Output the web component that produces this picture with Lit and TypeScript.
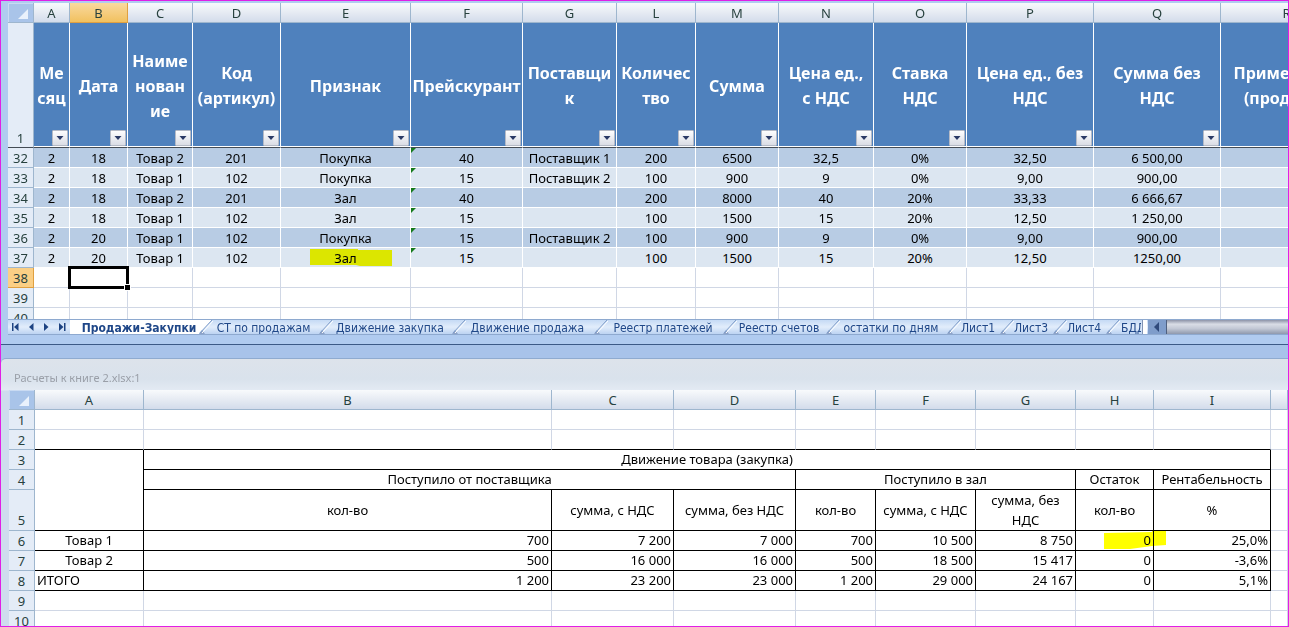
import { LitElement, html, svg, css, nothing } from "lit";
import { customElement, state } from "lit/decorators.js";

interface Column {
  letter: string;
  width: number;
  title?: string[];
}

const SALES_COLUMNS: Column[] = [
  { letter: "A", width: 36, title: ["Ме", "сяц"] },
  { letter: "B", width: 58, title: ["Дата"] },
  { letter: "C", width: 65, title: ["Наиме", "нован", "ие"] },
  { letter: "D", width: 88, title: ["Код", "(артикул)"] },
  { letter: "E", width: 130, title: ["Признак"] },
  { letter: "F", width: 112, title: ["Прейскурант"] },
  { letter: "G", width: 94, title: ["Поставщи", "к"] },
  { letter: "L", width: 79, title: ["Количес", "тво"] },
  { letter: "M", width: 83, title: ["Сумма"] },
  { letter: "N", width: 95, title: ["Цена ед.,", "с НДС"] },
  { letter: "O", width: 93, title: ["Ставка", "НДС"] },
  { letter: "P", width: 127, title: ["Цена ед., без", "НДС"] },
  { letter: "Q", width: 127, title: ["Сумма без", "НДС"] },
  { letter: "R", width: 132, title: ["Примечание", "(продажи)"] },
];

const SALES_ROWS: [number, string[]][] = [
  [32, ["2", "18", "Товар 2", "201", "Покупка", "40", "Поставщик 1", "200", "6500", "32,5", "0%", "32,50", "6 500,00", ""]],
  [33, ["2", "18", "Товар 1", "102", "Покупка", "15", "Поставщик 2", "100", "900", "9", "0%", "9,00", "900,00", ""]],
  [34, ["2", "18", "Товар 2", "201", "Зал", "40", "", "200", "8000", "40", "20%", "33,33", "6 666,67", ""]],
  [35, ["2", "18", "Товар 1", "102", "Зал", "15", "", "100", "1500", "15", "20%", "12,50", "1 250,00", ""]],
  [36, ["2", "20", "Товар 1", "102", "Покупка", "15", "Поставщик 2", "100", "900", "9", "0%", "9,00", "900,00", ""]],
  [37, ["2", "20", "Товар 1", "102", "Зал", "15", "", "100", "1500", "15", "20%", "12,50", "1250,00", ""]],
];

const TABS: { name: string; width: number }[] = [
  { name: "Продажи-Закупки", width: 129 },
  { name: "СТ по продажам", width: 120 },
  { name: "Движение закупка", width: 133 },
  { name: "Движение продажа", width: 142 },
  { name: "Реестр платежей", width: 129 },
  { name: "Реестр счетов", width: 103 },
  { name: "остатки по дням", width: 121 },
  { name: "Лист1", width: 53 },
  { name: "Лист3", width: 53 },
  { name: "Лист4", width: 53 },
  { name: "БДДС", width: 53 },
];

const STOCK_COLUMNS: Column[] = [
  { letter: "A", width: 109 },
  { letter: "B", width: 408 },
  { letter: "C", width: 122 },
  { letter: "D", width: 122 },
  { letter: "E", width: 80 },
  { letter: "F", width: 100 },
  { letter: "G", width: 100 },
  { letter: "H", width: 78 },
  { letter: "I", width: 117 },
];

const STOCK_ROWS: [number, string[]][] = [
  [6, ["Товар 1", "700", "7 200", "7 000", "700", "10 500", "8 750", "0", "25,0%"]],
  [7, ["Товар 2", "500", "16 000", "16 000", "500", "18 500", "15 417", "0", "-3,6%"]],
  [8, ["ИТОГО", "1 200", "23 200", "23 000", "1 200", "29 000", "24 167", "0", "5,1%"]],
];

const sheetStyles = css`
  :host {
    display: block;
    min-width: 0;
    min-height: 0;
    overflow: hidden;
    background: #fff;
  }
  table {
    width: 100%;
    table-layout: fixed;
    border-collapse: separate;
    border-spacing: 0;
    font-size: 13px;
    line-height: 19px;
    color: #000;
  }
  .gutter {
    width: 26px;
  }
  th,
  td {
    box-sizing: border-box;
    height: 20px;
    padding: 0;
    font-weight: 400;
    text-align: center;
    white-space: nowrap;
    position: relative;
    border-right: 1px solid #d0d7e5;
    border-bottom: 1px solid #d0d7e5;
  }
  .letter,
  .number {
    padding-top: 2px;
    line-height: 17px;
    color: #27413e;
    border-color: #9eb6ce;
  }
  .letter {
    background: linear-gradient(#f8fafc, #e6ebf3 50%, #d3dceb);
  }
  .number {
    background: #e4ecf7;
    vertical-align: bottom;
  }
  .corner {
    background: #a9c4e9;
    border-color: #9eb6ce;
    box-shadow: inset 1px 1px #c9daf2;
  }
  .corner svg {
    display: block;
    margin: 3px 4px 0 auto;
  }
  .current {
    background: linear-gradient(#f9d99f, #f1c15f);
    border-color: #e0a040;
  }
  .marker {
    position: absolute;
    mix-blend-mode: multiply;
    pointer-events: none;
  }
`;

const cornerCell = () => html`<th class="corner" aria-label="Выделить все">
  <svg width="12" height="12" viewBox="0 0 12 12"><path d="M11 1V11H1Z" fill="#e9f1fc" /></svg>
</th>`;

@customElement("sales-sheet")
class SalesSheet extends LitElement {
  static styles = [
    sheetStyles,
    css`
      .title {
        height: 125px;
        padding-top: 2px;
        background: #4f81bd;
        color: #fff;
        font-size: 16px;
        font-weight: 700;
        line-height: 25px;
        border-right-color: #fff;
        border-bottom-color: #444c55;
        box-shadow: inset 0 -1px #fff;
      }
      .first {
        height: 125px;
        border-bottom-color: #444c55;
      }
      .filter {
        position: absolute;
        right: 1px;
        bottom: 1px;
        width: 16px;
        height: 16px;
        padding: 0;
        display: grid;
        place-items: center;
        border: 1px solid #b5bac6;
        border-radius: 1px;
        background: linear-gradient(#fdfdfe, #dadde5);
      }
      .data td {
        padding-top: 2px;
        line-height: 17px;
        border-color: #fff;
      }
      .dark td {
        background: #b8cce4;
      }
      .light td {
        background: #dce6f1;
      }
      .flag {
        position: absolute;
        left: 0;
        top: 0;
      }
      .marker {
        left: 29px;
        top: 0;
      }
      .cursor {
        position: absolute;
        z-index: 1;
        inset: -2px;
        border: 3px solid #000;
      }
      .cursor::after {
        content: "";
        position: absolute;
        right: -4px;
        bottom: -4px;
        width: 5px;
        height: 5px;
        background: #000;
        outline: 1px solid #fff;
      }
      .current.number {
        background: #fbcf85;
      }
    `,
  ];

  private cell(row: number, index: number, text: string) {
    return html`<td>
      ${index === 5
        ? html`<svg class="flag" width="6" height="6" viewBox="0 0 6 6"><path d="M0 0H5L0 5Z" fill="#157a1c" /></svg>`
        : nothing}
      ${text}
      ${row === 37 && index === 4
        ? html`<svg class="marker" width="84" height="20" viewBox="0 0 84 20">
            <path d="M0 1H48V2H82V18H50L46 17H0Z" fill="#ff0" />
          </svg>`
        : nothing}
    </td>`;
  }

  render() {
    return html`<table aria-label="Продажи-Закупки">
      <colgroup>
        <col class="gutter" />
        ${SALES_COLUMNS.map((c) => html`<col style="width:${c.width}px" />`)}
      </colgroup>
      <thead>
        <tr>
          ${cornerCell()}
          ${SALES_COLUMNS.map((c) => html`<th class="letter ${c.letter === "B" ? "current" : ""}">${c.letter}</th>`)}
        </tr>
        <tr>
          <th class="number first">1</th>
          ${SALES_COLUMNS.map(
            (c) => html`<th class="title" scope="col">
              ${c.title!.map((line, i) => html`${i ? html`<br />` : nothing}${line}`)}
              <button class="filter" aria-label="Фильтр ${c.title!.join("")}">
                <svg width="8" height="4" viewBox="0 0 8 4"><path d="M0.500 0H7.500L4 4Z" fill="#2b3a66" /></svg>
              </button>
            </th>`
          )}
        </tr>
      </thead>
      <tbody>
        ${SALES_ROWS.map(
          ([n, cells], r) => html`<tr class="data ${r % 2 ? "light" : "dark"}">
            <th class="number" scope="row">${n}</th>
            ${cells.map((text, i) => this.cell(n, i, text))}
          </tr>`
        )}
        ${[38, 39, 40].map(
          (n) => html`<tr>
            <th class="number ${n === 38 ? "current" : ""}" scope="row">${n}</th>
            ${SALES_COLUMNS.map(
              (c) => html`<td>${n === 38 && c.letter === "B" ? html`<div class="cursor"></div>` : nothing}</td>`
            )}
          </tr>`
        )}
      </tbody>
    </table>`;
  }
}

@customElement("stock-sheet")
class StockSheet extends LitElement {
  static styles = [
    sheetStyles,
    css`
      .boxed {
        border-color: #000;
      }
      .under {
        border-bottom-color: #000;
      }
      .tall {
        height: 40px;
        line-height: 20px;
      }
      .amount {
        text-align: right;
        padding-right: 2px;
      }
      .total {
        text-align: left;
        padding-left: 2px;
      }
      .marker {
        left: 28px;
        top: -1px;
      }
    `,
  ];

  private blank(n: number, under = false) {
    return html`<tr>
      <th class="number" scope="row">${n}</th>
      ${STOCK_COLUMNS.map(() => html`<td class=${under ? "under" : ""}></td>`)}
      <td></td>
    </tr>`;
  }

  private kind(n: number, i: number) {
    if (i > 0) return "boxed amount";
    return n === 8 ? "boxed total" : "boxed";
  }

  render() {
    return html`<table aria-label="Движение товара">
      <colgroup>
        <col class="gutter" />
        ${STOCK_COLUMNS.map((c) => html`<col style="width:${c.width}px" />`)}
        <col />
      </colgroup>
      <thead>
        <tr>
          ${cornerCell()} ${STOCK_COLUMNS.map((c) => html`<th class="letter">${c.letter}</th>`)}
          <th class="letter"></th>
        </tr>
      </thead>
      <tbody>
        ${this.blank(1)} ${this.blank(2, true)}
        <tr>
          <th class="number" scope="row">3</th>
          <td class="boxed" rowspan="3"></td>
          <td class="boxed" colspan="8">Движение товара (закупка)</td>
          <td></td>
        </tr>
        <tr>
          <th class="number" scope="row">4</th>
          <td class="boxed" colspan="3">Поступило от поставщика</td>
          <td class="boxed" colspan="3">Поступило в зал</td>
          <td class="boxed">Остаток</td>
          <td class="boxed">Рентабельность</td>
          <td></td>
        </tr>
        <tr>
          <th class="number tall" scope="row">5</th>
          <td class="boxed tall">кол-во</td>
          <td class="boxed tall">сумма, с НДС</td>
          <td class="boxed tall">сумма, без НДС</td>
          <td class="boxed tall">кол-во</td>
          <td class="boxed tall">сумма, с НДС</td>
          <td class="boxed tall">сумма, без<br />НДС</td>
          <td class="boxed tall">кол-во</td>
          <td class="boxed tall">%</td>
          <td></td>
        </tr>
        ${STOCK_ROWS.map(
          ([n, cells]) => html`<tr>
            <th class="number" scope="row">${n}</th>
            ${cells.map(
              (text, i) => html`<td class=${this.kind(n, i)}>
                ${text}${n === 6 && i === 7
                  ? html`<svg class="marker" width="64" height="20" viewBox="0 0 64 20">
                      <path d="M0 3L48 2V0H62V15L48 16L26 19H0Z" fill="#ff0" />
                    </svg>`
                  : nothing}
              </td>`
            )}
            <td></td>
          </tr>`
        )}
        ${this.blank(9)} ${this.blank(10)}
      </tbody>
    </table>`;
  }
}

@customElement("sheet-tabs")
class SheetTabs extends LitElement {
  @state() private active = 0;

  static styles = css`
    :host {
      display: flex;
      height: 16px;
      box-sizing: border-box;
      border-top: 1px solid #8ea9cf;
      border-bottom: 1px solid #8ea9cf;
      background: linear-gradient(#c5daf5, #e2edfb 50%, #bcd3f2);
      font-family: "DejaVu Sans Condensed", "Noto Sans", sans-serif;
      font-size: 12px;
      line-height: 16px;
    }
    button {
      font: inherit;
      padding: 0;
      border: 0;
      background: none;
      flex: none;
    }
    .arrows {
      display: flex;
      flex: none;
      width: 62px;
    }
    .arrows button {
      flex: 1;
      display: grid;
      place-items: center;
    }
    .tabs {
      display: flex;
      flex: 1 1 1071px;
      min-width: 0;
      overflow: hidden;
    }
    .tab {
      position: relative;
      height: 14px;
      padding-left: 9px;
      color: #1f4788;
      white-space: nowrap;
    }
    .active {
      background: #fff;
      font-weight: 700;
    }
    .slant {
      position: absolute;
      left: 0;
      top: 0;
    }
    .splitter {
      flex: none;
      width: 4px;
      margin: 0 1px;
      background: #fff;
      border-left: 1px solid #8093b4;
    }
    .scroll {
      flex: 0 1 140px;
      display: flex;
      background: #7f9dcb;
    }
    .scroll button {
      width: 18px;
      display: grid;
      place-items: center;
    }
    .thumb {
      flex: 1;
      border-left: 1px solid #4f607f;
      background: linear-gradient(#8d94a8, #d9dde6 30%, #c3c9d6 60%, #8f99ad);
    }
  `;

  private arrow(label: string, path: string) {
    return html`<button aria-label=${label}>
      <svg width="9" height="8" viewBox="0 0 9 8"><path d=${path} fill="#1d4382" /></svg>
    </button>`;
  }

  render() {
    return html`
      <div class="arrows">
        ${this.arrow("Первый лист", "M1 0H2.500V8H1ZM7.500 0V8L3 4Z")} ${this.arrow("Предыдущий лист", "M6.500 0V8L2 4Z")}
        ${this.arrow("Следующий лист", "M2 0V8L6.500 4Z")} ${this.arrow("Последний лист", "M1 0V8L5.500 4ZM6 0H7.500V8H6Z")}
      </div>
      <div class="tabs" role="tablist">
        ${TABS.map(
          (t, i) => html`<button
            class="tab ${i === this.active ? "active" : ""}"
            role="tab"
            aria-selected=${i === this.active}
            style="width:${t.width}px"
            @click=${() => (this.active = i)}
          >
            ${i
              ? html`<svg class="slant" width="14" height="14" viewBox="0 0 14 14">
                  ${i === this.active + 1 ? svg`<path d="M0 0H13L0 13Z" fill="#fff" />` : nothing}
                  <path d="M0 14L3 10L6 14Z" fill="#8ea3c8" />
                  <path d="M1 13L13 0" stroke="#7f9cc8" fill="none" />
                  <path d="M3 13L14 1" stroke="#fff" fill="none" />
                </svg>`
              : nothing}${t.name}
          </button>`
        )}
      </div>
      <div class="splitter"></div>
      <div class="scroll">
        <button aria-label="Прокрутить влево">
          <svg width="6" height="10" viewBox="0 0 6 10"><path d="M5 0V10L0 5Z" fill="#2f4a7c" /></svg>
        </button>
        <div class="thumb"></div>
      </div>
    `;
  }
}

@customElement("app-root")
class AppRoot extends LitElement {
  static styles = css`
    :host {
      display: grid;
      grid-template-columns: minmax(0, 1fr);
      grid-template-rows: 344fr 281fr;
      box-sizing: border-box;
      height: 100vh;
      overflow: hidden;
      border: 1px solid #e01fe6;
      background: #a8c3ea;
      font-family: "Noto Sans", "Open Sans", sans-serif;
    }
    .book {
      display: flex;
      flex-direction: column;
      min-height: 0;
      box-sizing: border-box;
    }
    .upper {
      padding: 2px 0 9px 7px;
      background: #b0cbf0;
      border-bottom: 1px solid #3c5a87;
    }
    .lower {
      margin-top: 13px;
      padding-left: 8px;
      background: linear-gradient(#dde3eb, #d9e2ec 20px, #e3eaf3 31px, #cfdcee 32px);
      border-top: 1px solid #8fabd0;
      border-top-left-radius: 5px;
    }
    sales-sheet,
    stock-sheet {
      flex: 1 1 0;
    }
    .caption {
      flex: none;
      margin: 0;
      padding: 9px 5px 3px;
      font-size: 11px;
      font-weight: 400;
      line-height: 19px;
      color: #9a9fa8;
    }
  `;

  render() {
    return html`
      <section class="book upper">
        <sales-sheet></sales-sheet>
        <sheet-tabs></sheet-tabs>
      </section>
      <section class="book lower">
        <h1 class="caption">Расчеты к книге 2.xlsx:1</h1>
        <stock-sheet></stock-sheet>
      </section>
    `;
  }
}
